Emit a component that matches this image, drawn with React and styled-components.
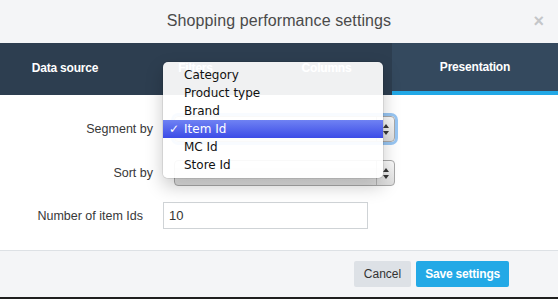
import styled, { createGlobalStyle, css } from "styled-components";

const GlobalStyle = createGlobalStyle`
  html, body { margin:0; padding:0; background:#1f1f1f; }
  body { font-family:"Liberation Sans", Arial, sans-serif; }
`;

const Modal = styled.div`
  position:relative; width:558px; height:297px; background:#fff;
  display:flex; flex-direction:column; overflow:hidden;
`;

const Header = styled.header`
  height:43px; flex:none; background:#f4f5f7;
  display:grid; grid-template-columns:1fr auto 1fr; align-items:center;
  h1 { margin:0 0 1px; font-size:16px; font-weight:400; color:#4a4a4a; letter-spacing:0.1px; }
`;

const Close = styled.span`
  justify-self:end; margin-right:14px; margin-top:-2px;
  font-size:18px; font-weight:700; color:#c4c6c9; line-height:1;
`;

const TabBar = styled.nav`
  height:52px; flex:none; background:#2d3e50; display:flex;
`;

const Tab = styled.div`
  width:${p => p.$w}px; height:100%; box-sizing:border-box;
  display:flex; align-items:center; justify-content:center; padding-bottom:3px;
  color:#fff; font-size:12px; font-weight:700; letter-spacing:-0.2px;
  ${p => p.$active && css`
    background:#34495e; border-bottom:4px solid #22a8e6; padding-bottom:0;
  `}
`;

const Body = styled.section`
  flex:1; display:flex; flex-direction:column; padding-top:21px;
`;

const Row = styled.div`
  display:flex; align-items:center; margin-top:${p => p.$mt || 0}px;
`;

const Label = styled.label`
  width:${p => p.$w}px; box-sizing:border-box; text-align:right; padding-right:${p => p.$gap}px;
  font-size:12.5px; color:#383838; flex:none;
`;

const Select = styled.div`
  position:relative; width:221px; height:26px; box-sizing:border-box;
  border:1px solid #a9a9a9; border-radius:4px;
  background:linear-gradient(#fbfbfb, #dedede);
  ${p => p.$focus && css`box-shadow:0 0 0 3px #98c6f3;`}
  &::after {
    content:""; position:absolute; right:0; top:0; bottom:0; width:17px;
    border-left:1px solid #b5b5b5;
  }
`;

const Stepper = styled.svg`
  position:absolute; right:5px; top:7px; z-index:1;
`;

const TextInput = styled.div`
  width:205px; height:27px; box-sizing:border-box; border:1px solid #cfd3d6;
  padding:0 5px; display:flex; align-items:center;
  font-size:13px; color:#333;
`;

const Footer = styled.footer`
  height:47px; flex:none; box-sizing:border-box; background:#f4f5f7;
  border-top:1px solid #dde1e5;
  display:flex; align-items:center; justify-content:flex-end; gap:5px; padding-right:49px;
`;

const Button = styled.button`
  height:26px; border:0; border-radius:2px; font-family:inherit; font-size:12px;
  padding:0 ${p => p.$pad}px;
  background:${p => (p.$primary ? "#23a9e6" : "#dde1e6")};
  color:${p => (p.$primary ? "#fff" : "#333")};
  font-weight:${p => (p.$primary ? 700 : 400)};
  letter-spacing:${p => (p.$primary ? "-0.2px" : "0")};
`;

const Menu = styled.ul`
  position:absolute; left:163px; top:62px; width:220px; margin:0; padding:4px 0;
  list-style:none; box-sizing:border-box;
  background:rgba(255,255,255,0.93); border-radius:5px;
  box-shadow:0 8px 18px rgba(0,0,0,0.22), 0 0 0 1px rgba(0,0,0,0.08);
  font-family:"DejaVu Sans", sans-serif; font-size:12px;
`;

const Item = styled.li`
  position:relative; height:18px; line-height:18px; padding-left:21px; color:#111;
  ${p => p.$selected && css`
    color:#fff; background:linear-gradient(#6f82f3, #3c4ce7);
    &::before { content:"✓"; position:absolute; left:6px; top:0; font-weight:700; }
  `}
`;

const options = ["Category", "Product type", "Brand", "Item Id", "MC Id", "Store Id"];

const Arrows = () => (
  <Stepper width="6" height="11" viewBox="0 0 6 11">
    <path d="M0 4 L3 0 L6 4 Z M0 7 L3 11 L6 7 Z" fill="#333" />
  </Stepper>
);

export default function App() {
  return (
    <>
      <GlobalStyle />
      <Modal>
        <Header>
          <span />
          <h1>Shopping performance settings</h1>
          <Close>×</Close>
        </Header>
        <TabBar>
          <Tab $w={130}>Data source</Tab>
          <Tab $w={131}>Filters</Tab>
          <Tab $w={131}>Columns</Tab>
          <Tab $w={166} $active>Presentation</Tab>
        </TabBar>
        <Body>
          <Row>
            <Label $w={174} $gap={21}>Segment by</Label>
            <Select $focus><Arrows /></Select>
          </Row>
          <Row $mt={18}>
            <Label $w={174} $gap={21}>Sort by</Label>
            <Select><Arrows /></Select>
          </Row>
          <Row $mt={16}>
            <Label $w={163} $gap={20}>Number of item Ids</Label>
            <TextInput>10</TextInput>
          </Row>
        </Body>
        <Footer>
          <Button $pad={10}>Cancel</Button>
          <Button $pad={9} $primary>Save settings</Button>
        </Footer>
        <Menu>
          {options.map(o => (
            <Item key={o} $selected={o === "Item Id"}>{o}</Item>
          ))}
        </Menu>
      </Modal>
    </>
  );
}
